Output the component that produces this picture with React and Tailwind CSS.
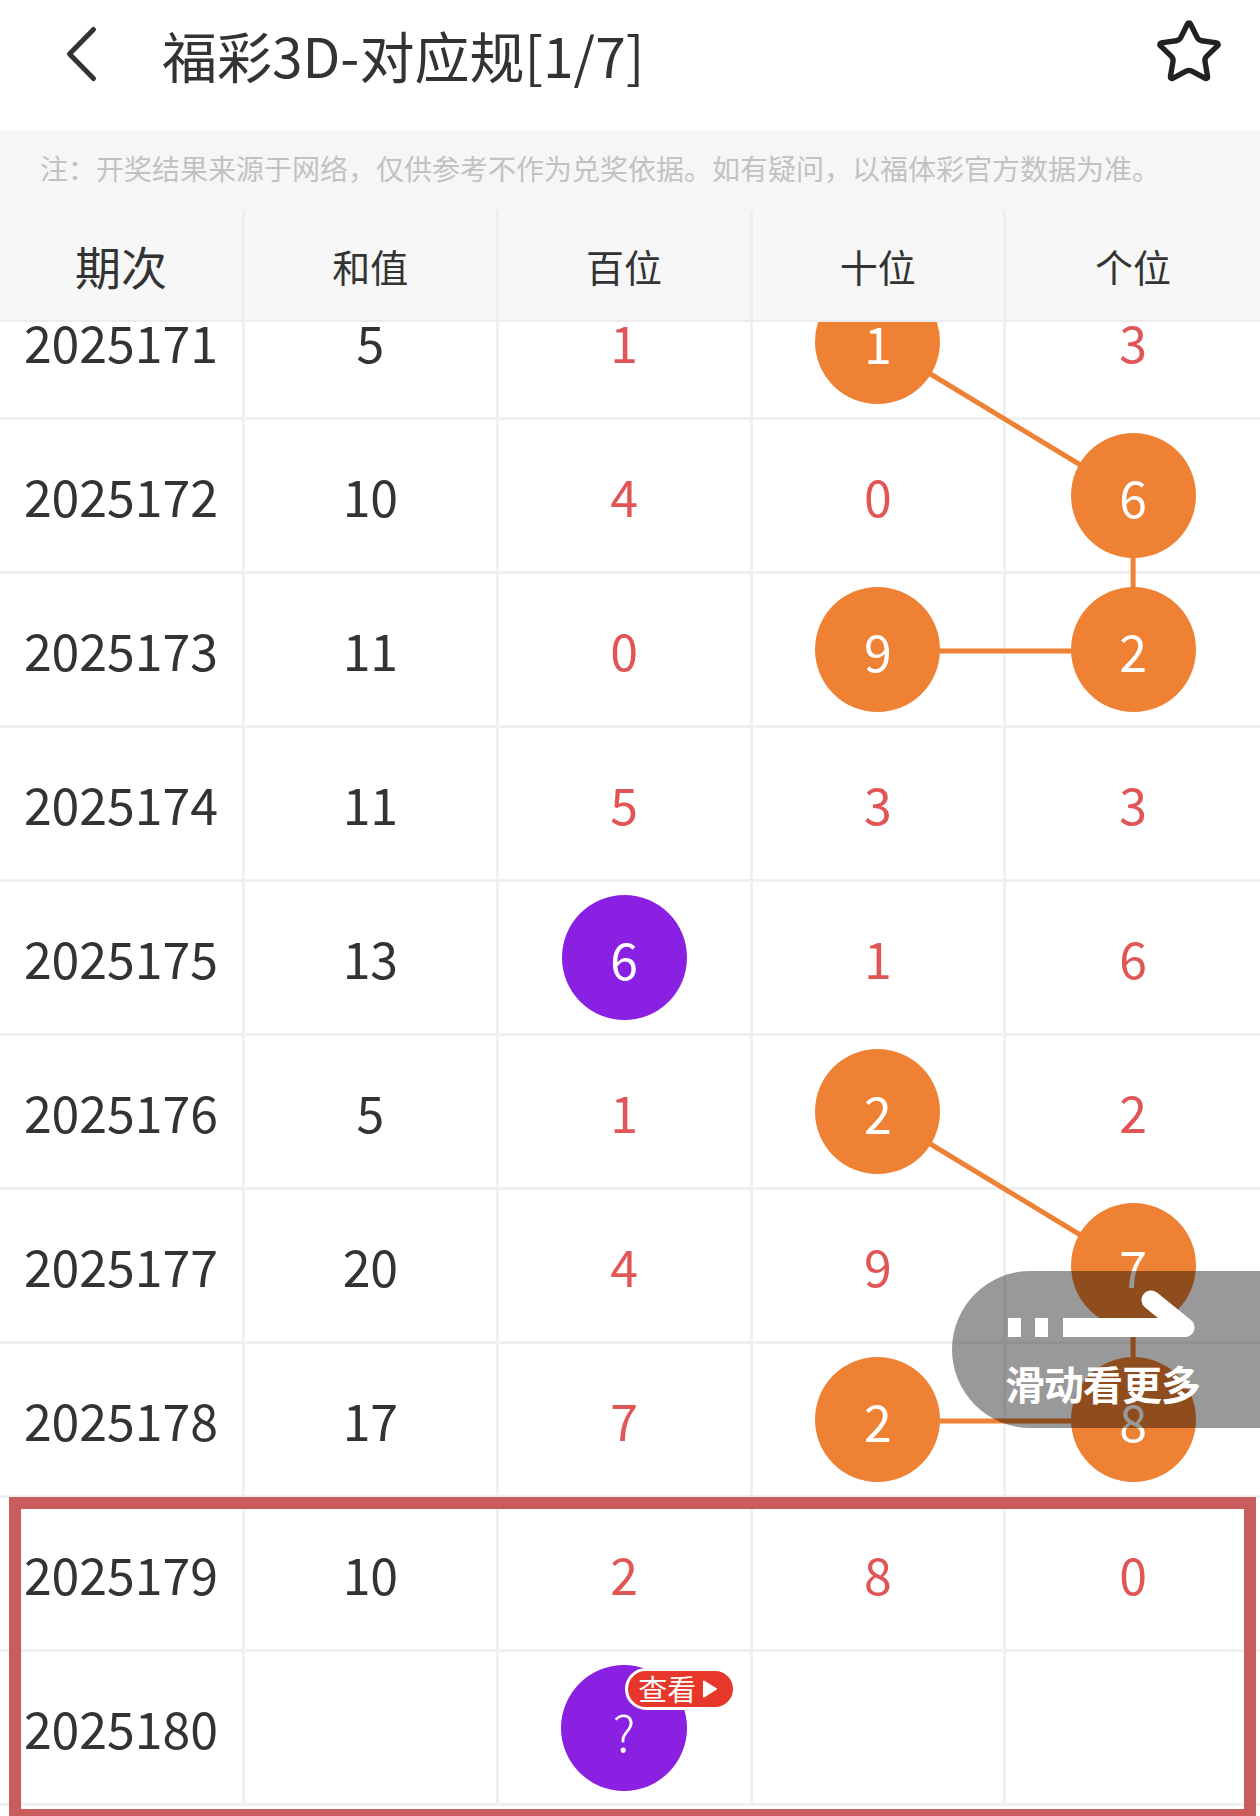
import React from 'react';

const FONT = { fontFamily: '"Noto Sans CJK SC", "Noto Sans", sans-serif' };

const ORANGE = 'bg-[#ee8133]';
const PURPLE = 'bg-[#8a20e2]';

// o = orange ball, p = purple ball
const rows = [
  { issue: '2025171', sum: '5', nums: [['1'], ['1', 'o'], ['3']] },
  { issue: '2025172', sum: '10', nums: [['4'], ['0'], ['6', 'o']] },
  { issue: '2025173', sum: '11', nums: [['0'], ['9', 'o'], ['2', 'o']] },
  { issue: '2025174', sum: '11', nums: [['5'], ['3'], ['3']] },
  { issue: '2025175', sum: '13', nums: [['6', 'p'], ['1'], ['6']] },
  { issue: '2025176', sum: '5', nums: [['1'], ['2', 'o'], ['2']] },
  { issue: '2025177', sum: '20', nums: [['4'], ['9'], ['7', 'o']] },
  { issue: '2025178', sum: '17', nums: [['7'], ['2', 'o'], ['8', 'o']] },
  { issue: '2025179', sum: '10', nums: [['2'], ['8'], ['0']] },
  { issue: '2025180', sum: '', nums: [['?', 'q'], [''], ['']] },
];

const GRID = 'grid grid-cols-[245px_1fr_1fr_1fr_1fr]';

const Ball = ({ value, kind }) => {
  if (kind === 'q') {
    return (
      <div className={`relative z-20 w-[126px] h-[126px] rounded-full ${PURPLE} flex items-center justify-center`}>
        <span className="text-white text-[50px] font-light leading-none mt-[4px]">?</span>
        <div className="absolute left-[64px] top-[3px] h-[42px] w-[111px] rounded-full border-[3px] border-white bg-[#e6372a] flex items-center pl-[10px] gap-[6px]">
          <span className="text-white text-[29px] leading-none">查看</span>
          <svg width="16" height="18" viewBox="0 0 16 18">
            <path d="M2 1.5 L14 9 L2 16.5 Z" fill="#fff" stroke="#fff" strokeWidth="2" strokeLinejoin="round" />
          </svg>
        </div>
      </div>
    );
  }
  return (
    <div className={`relative z-20 w-[125px] h-[125px] rounded-full ${kind === 'p' ? PURPLE : ORANGE} flex items-center justify-center`}>
      <span className="text-white text-[50px] leading-none">{value}</span>
    </div>
  );
};

const Cell = ({ children, last, className = '' }) => (
  <div className={`h-[154px] flex items-center justify-center border-b-[3px] border-[#f0f0f0] ${last ? '' : 'border-r-[3px]'} ${className}`}>
    {children}
  </div>
);

// ball centres inside the body (x, y)
const cx = [122.5, 372, 625.6, 879.4, 1133.1];
const cy = (i) => 77 + 154 * i;
const links = [
  [cx[3], cy(0), cx[4], cy(1)],
  [cx[4], cy(1), cx[4], cy(2)],
  [cx[3], cy(2), cx[4], cy(2)],
  [cx[3], cy(5), cx[4], cy(6)],
  [cx[4], cy(6), cx[4], cy(7)],
  [cx[3], cy(7), cx[4], cy(7)],
];

export default function App() {
  return (
    <div className="relative w-[1260px] h-[1816px] overflow-hidden bg-white flex flex-col" style={FONT}>
      {/* top bar */}
      <div className="h-[131px] shrink-0 flex items-start">
        <div className="h-[108px] w-full flex items-center relative">
          <svg className="ml-[60px]" width="40" height="70" viewBox="0 0 40 70">
            <path d="M33.5 10.5 L9.5 35 L33.5 59.5" fill="none" stroke="#333" strokeWidth="5" strokeLinecap="round" strokeLinejoin="round" />
          </svg>
          <h1 className="ml-[62px] text-[55px] leading-none text-[#333]">福彩3D-对应规[1/7]</h1>
          <svg className="ml-auto mr-[36px] mt-[-4px]" width="70" height="70" viewBox="0 0 24 24" fill="none" stroke="#222" strokeWidth="1.85" strokeLinecap="round" strokeLinejoin="round">
            <path d="M11.525 2.295a.53.53 0 0 1 .95 0l2.31 4.679a2.123 2.123 0 0 0 1.595 1.16l5.166.756a.53.53 0 0 1 .294.904l-3.736 3.638a2.123 2.123 0 0 0-.611 1.878l.882 5.14a.53.53 0 0 1-.771.56l-4.618-2.428a2.122 2.122 0 0 0-1.973 0L6.396 21.010a.53.53 0 0 1-.77-.56l.881-5.139a2.122 2.122 0 0 0-.611-1.879L2.16 9.795a.53.53 0 0 1 .294-.906l5.165-.755a2.122 2.122 0 0 0 1.597-1.160z" />
          </svg>
        </div>
      </div>

      {/* notice */}
      <div className="h-[79px] shrink-0 bg-[#f6f6f6] flex items-center pl-[40px] pb-[6px]">
        <p className="text-[28px] leading-none text-[#c2c2c2] whitespace-nowrap">注：开奖结果来源于网络，仅供参考不作为兑奖依据。如有疑问，以福体彩官方数据为准。</p>
      </div>

      {/* header */}
      <div className={`${GRID} h-[112px] shrink-0 bg-[#f7f7f7] border-b-[2px] border-[#ececec] relative z-30`}>
        <div className="flex items-center justify-center border-r-[3px] border-[#eeeeee] text-[46px] text-[#333]">期次</div>
        <div className="flex items-center justify-center border-r-[3px] border-[#eeeeee] text-[38px] text-[#333]">和值</div>
        <div className="flex items-center justify-center border-r-[3px] border-[#eeeeee] text-[38px] text-[#333]">百位</div>
        <div className="flex items-center justify-center border-r-[3px] border-[#eeeeee] text-[38px] text-[#333]">十位</div>
        <div className="flex items-center justify-center text-[38px] text-[#333]">个位</div>
      </div>

      {/* body, scrolled a little under the header */}
      <div className="flex-1 overflow-hidden">
        <div className="relative -mt-[56px]">
          {rows.map((r) => (
            <div key={r.issue} className={GRID}>
              <Cell className="text-[50px] text-[#333]">{r.issue}</Cell>
              <Cell className="text-[50px] text-[#333]">{r.sum}</Cell>
              {r.nums.map(([v, k], j) => (
                <Cell key={j} last={j === 2} className="text-[50px] text-[#e05656]">
                  {k ? <Ball value={v} kind={k} /> : v}
                </Cell>
              ))}
            </div>
          ))}

          <svg className="absolute inset-0 z-10 pointer-events-none" width="1260" height="1540" viewBox="0 0 1260 1540">
            {links.map(([x1, y1, x2, y2], i) => (
              <line key={i} x1={x1} y1={y1} x2={x2} y2={y2} stroke="#ee8133" strokeWidth="5" />
            ))}
          </svg>

          {/* highlight box round the last two rows */}
          <div className="absolute left-[9px] top-[1231px] w-[1247px] h-[324px] border-[12px] border-[#c95d5d] z-30 pointer-events-none" />
        </div>
      </div>

      {/* swipe hint */}
      <div className="absolute left-[952px] right-0 top-[1271px] h-[157px] rounded-l-full bg-black/40 z-40 flex flex-col items-start pl-[53px]">
        <svg className="mt-[17px]" width="192" height="50" viewBox="0 0 192 50">
          <rect x="3" y="30" width="13" height="19" fill="#fff" />
          <rect x="30" y="30" width="13" height="19" fill="#fff" />
          <rect x="58" y="30" width="124" height="19" fill="#fff" />
          <line x1="146" y1="12" x2="180" y2="39.5" stroke="#fff" strokeWidth="19" strokeLinecap="round" />
        </svg>
        <span className="mt-[25px] text-[40px] leading-[40px] font-bold text-white tracking-[-1px]">滑动看更多</span>
      </div>
    </div>
  );
}
